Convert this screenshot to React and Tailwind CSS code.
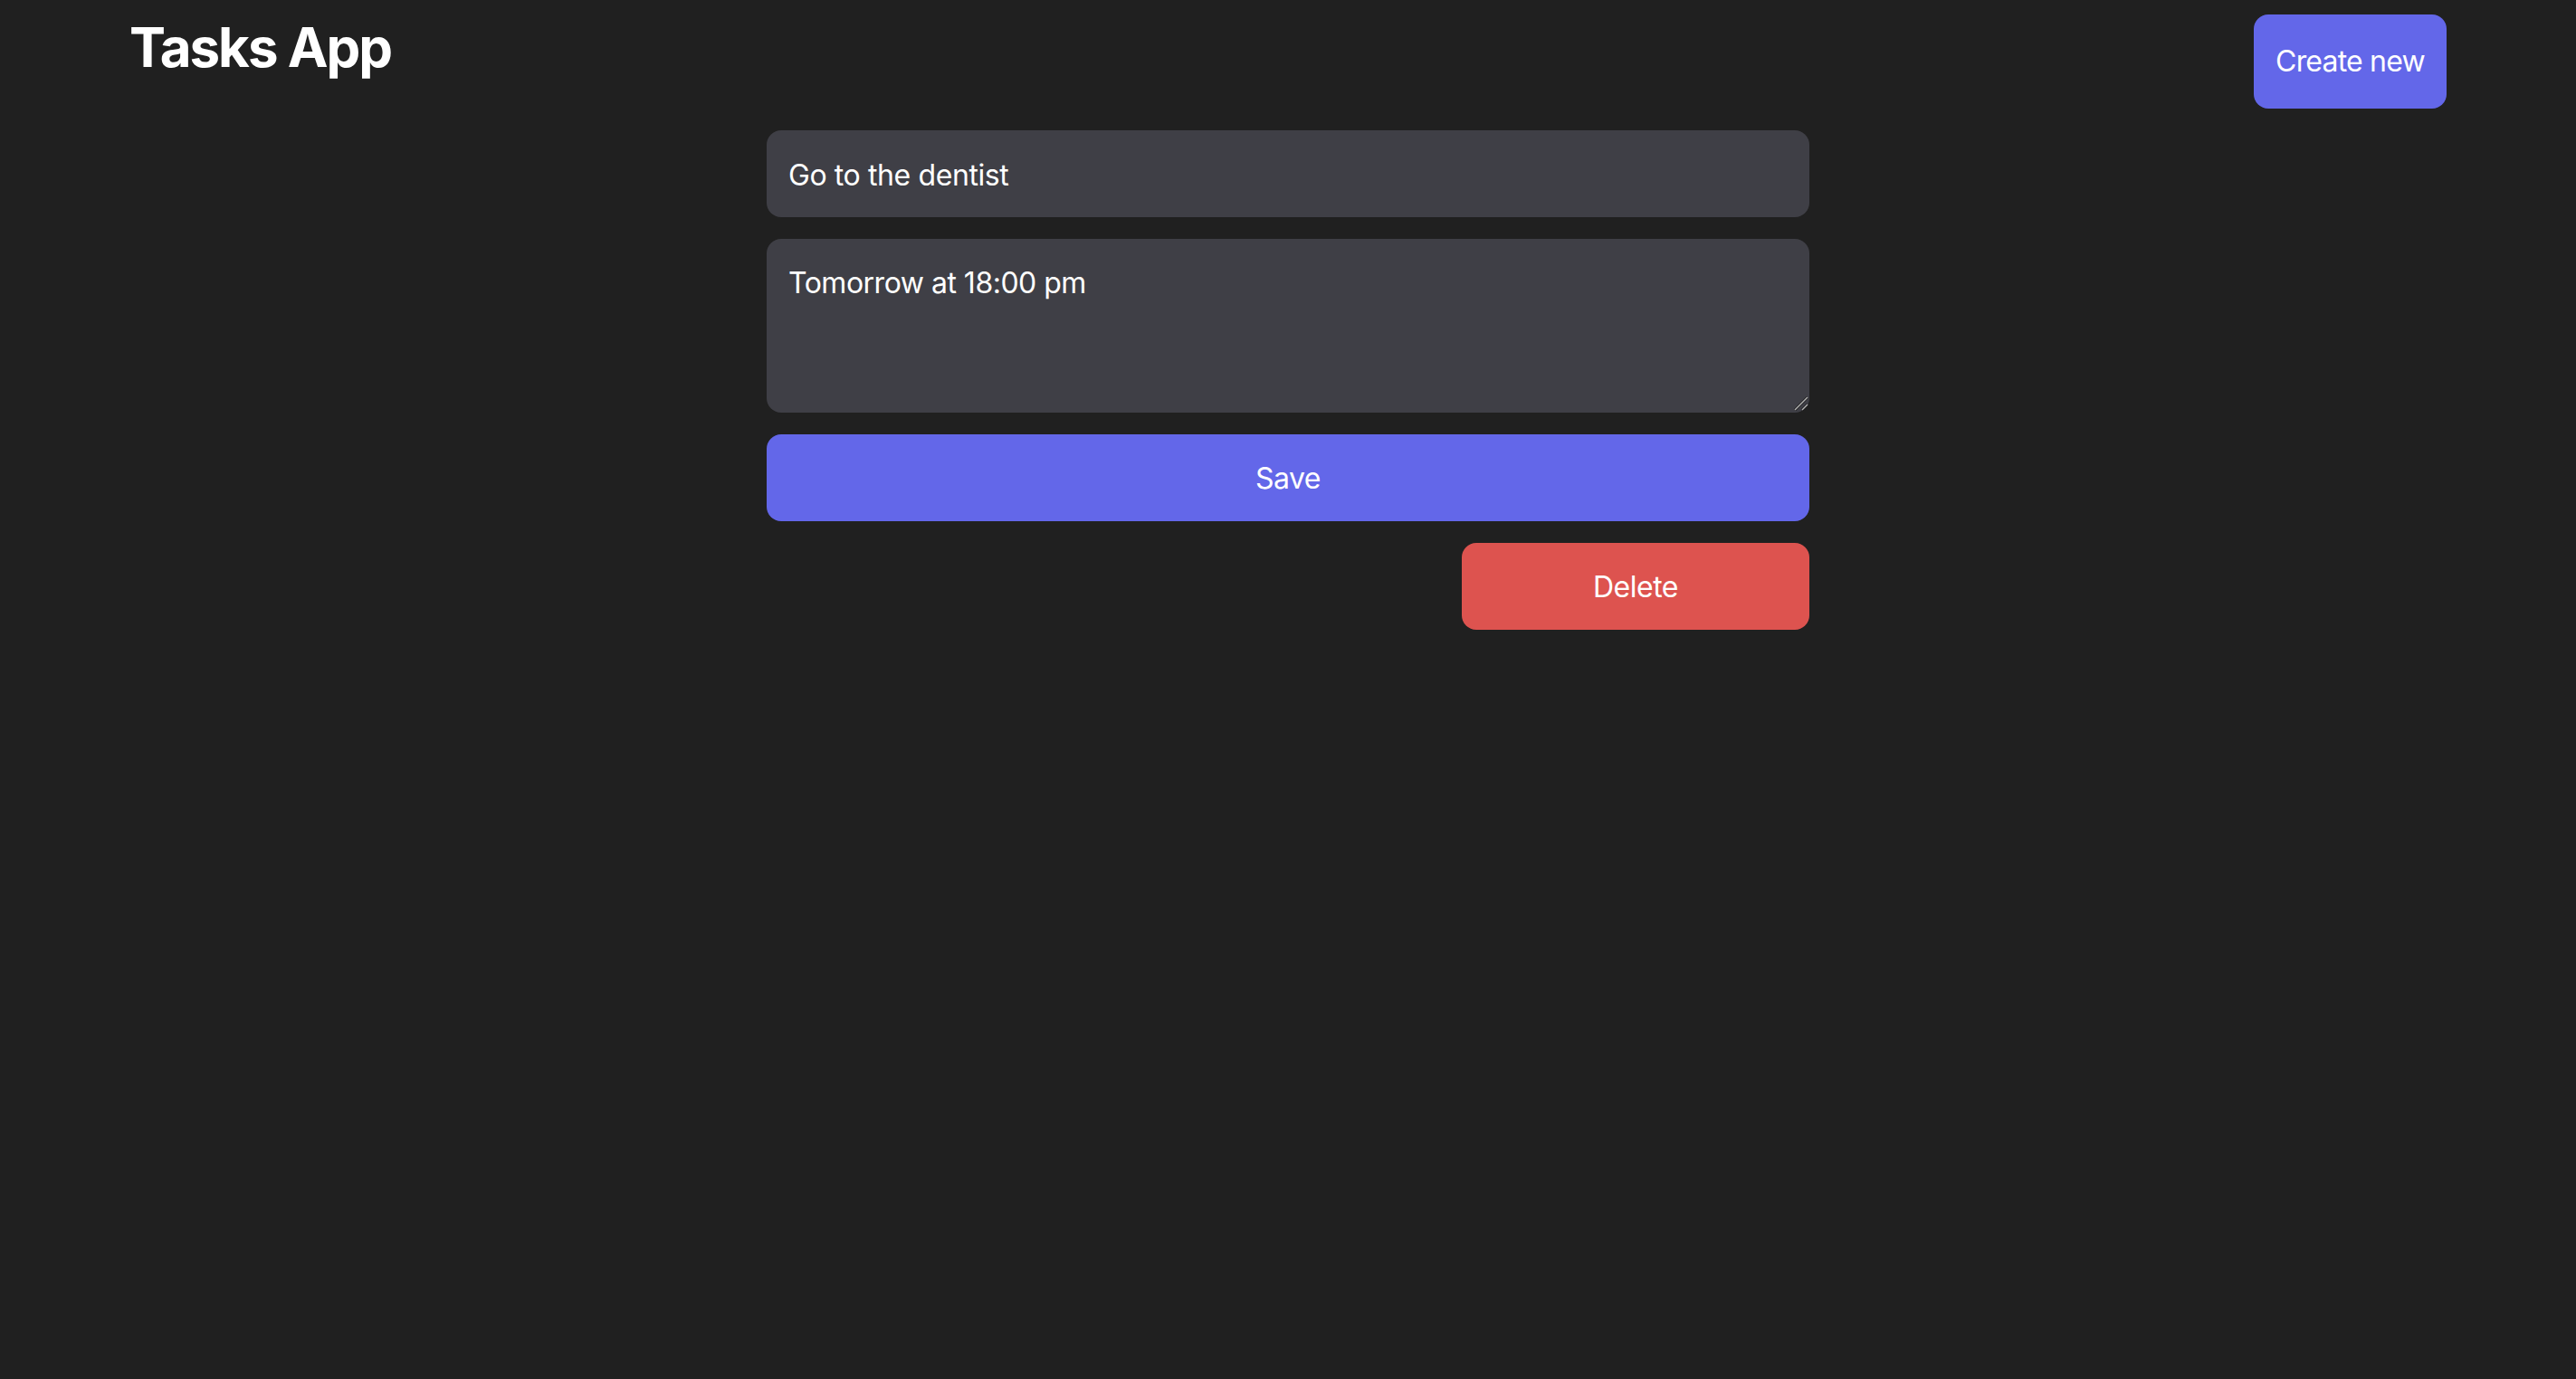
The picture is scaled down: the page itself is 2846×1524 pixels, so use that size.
export default function App() {
  return (
    <div className="min-h-screen w-full bg-[#202020] text-white [color-scheme:dark]" style={{ fontFamily: 'Inter, "Noto Sans", sans-serif' }}>
      <div className="mx-auto w-[2560px]">
        <header className="flex items-start justify-between pt-[16px]">
          <h1 className="text-[60px] leading-[72px] font-bold tracking-[-2px]">Tasks App</h1>
          <button className="flex h-[104px] w-[213px] items-center justify-center rounded-[16px] bg-[#6367e9] text-[32px] leading-[48px] tracking-[-0.8px] text-white">
            Create new
          </button>
        </header>
        <form className="mx-auto mt-[24px] flex w-[1152px] flex-col gap-[24px]" onSubmit={(e) => e.preventDefault()}>
          <input
            type="text"
            defaultValue="Go to the dentist"
            className="h-[96px] w-full rounded-[16px] bg-[#3f3f46] px-[24px] pt-[2px] text-[32px] leading-[48px] tracking-[-0.4px] text-white outline-none"
          />
          <div className="relative">
            <textarea
              defaultValue="Tomorrow at 18:00 pm"
              className="block h-[192px] w-full resize-none rounded-[16px] bg-[#3f3f46] px-[24px] pt-[25px] pb-[24px] text-[32px] leading-[48px] tracking-[-0.5px] text-white outline-none"
            />
            <svg className="pointer-events-none absolute right-[1px] bottom-[2px]" width="16" height="16" viewBox="0 0 16 16">
              <line x1="1" y1="15" x2="15" y2="1" stroke="#1a1a1a" strokeWidth="3" />
              <line x1="1" y1="15" x2="15" y2="1" stroke="#b4b4b4" strokeWidth="1.4" />
              <line x1="9" y1="15" x2="15" y2="9" stroke="#1a1a1a" strokeWidth="3" />
              <line x1="9" y1="15" x2="15" y2="9" stroke="#b4b4b4" strokeWidth="1.4" />
            </svg>
          </div>
          <button className="h-[96px] w-full rounded-[16px] bg-[#6367e9] pt-[2px] text-[32px] leading-[48px] tracking-[-0.5px] text-white">
            Save
          </button>
          <div className="flex justify-end">
            <button type="button" className="h-[96px] w-[384px] rounded-[16px] bg-[#dd534f] pt-[2px] text-[32px] leading-[48px] tracking-[-0.5px] text-white">
              Delete
            </button>
          </div>
        </form>
      </div>
    </div>
  );
}
